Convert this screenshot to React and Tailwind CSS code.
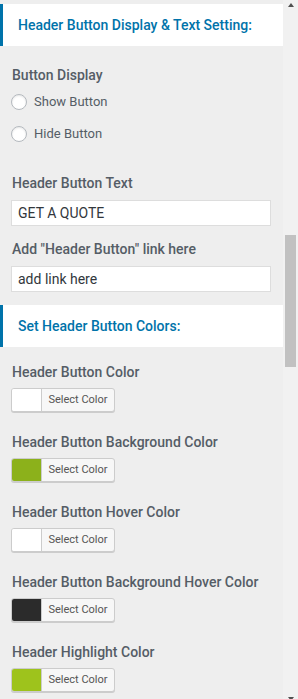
import React from "react";

const font = { fontFamily: "Roboto, 'Noto Sans', Arial, sans-serif" };

function SectionHeader({ children, className = "" }) {
  return (
    <div className={"h-[42px] bg-white border-l-[3px] border-[#0073aa] flex items-center pl-[15px] " + className}>
      <span className="text-[14px] font-medium text-[#0073aa] leading-[20px]">{children}</span>
    </div>
  );
}

function Label({ children, className = "" }) {
  return (
    <div className={"pl-[12px] text-[14px] font-medium text-[#555d66] leading-[20px] " + className}>{children}</div>
  );
}

function Radio({ label, className = "" }) {
  return (
    <div className={"flex items-center h-[24px] pl-[11px] " + className}>
      <span className="w-[16px] h-[16px] rounded-full bg-white border border-[#b4b9be] shadow-[inset_0_1px_2px_rgba(0,0,0,0.1)]" />
      <span className="ml-[7px] text-[13px] text-[#555d66] leading-[20px]">{label}</span>
    </div>
  );
}

function TextInput({ value, className = "" }) {
  return (
    <div className={"ml-[11px] w-[260px] h-[26px] bg-white border border-[#dddddd] flex items-center pl-[6px] " + className}>
      <span className="text-[14px] text-[#32373c] leading-[20px]">{value}</span>
    </div>
  );
}

function ColorPicker({ color, className = "" }) {
  return (
    <div className={"ml-[11px] w-[104px] h-[24px] flex rounded-[3px] border border-[#cccccc] bg-[#f7f7f7] shadow-[0_1px_0_#cccccc] overflow-hidden " + className}>
      <div className="w-[30px] h-full border-r border-[#cccccc]" style={{ backgroundColor: color }} />
      <div className="flex-1 flex items-center justify-center text-[11px] text-[#555555]">Select Color</div>
    </div>
  );
}

const colors = [
  { label: "Header Button Color", color: "#ffffff" },
  { label: "Header Button Background Color", color: "#8cb11b" },
  { label: "Header Button Hover Color", color: "#ffffff" },
  { label: "Header Button Background Hover Color", color: "#2b2b2b" },
  { label: "Header Highlight Color", color: "#9ec31c" },
];

export default function App() {
  return (
    <div className="flex w-[298px] h-[699px] overflow-hidden bg-[#eeeeee]" style={font}>
      <div className="w-[283px] pt-[4px] shrink-0">
        <SectionHeader>Header Button Display &amp; Text Setting:</SectionHeader>
        <Label className="mt-[19px]">Button Display</Label>
        <Radio label="Show Button" className="mt-[5px]" />
        <Radio label="Hide Button" className="mt-[8px]" />
        <Label className="mt-[27px]">Header Button Text</Label>
        <TextInput value="GET A QUOTE" className="mt-[7px]" />
        <Label className="mt-[13px]">Add "Header Button" link here</Label>
        <TextInput value="add link here" className="mt-[7px]" />
        <SectionHeader className="mt-[13px]">Set Header Button Colors:</SectionHeader>
        <div className="flex flex-col gap-[20px] mt-[15px]">
          {colors.map((c) => (
            <div key={c.label}>
              <Label>{c.label}</Label>
              <ColorPicker color={c.color} className="mt-[6px]" />
            </div>
          ))}
        </div>
      </div>
      <div className="w-[15px] bg-[#f1f1f1] flex flex-col items-center shrink-0">
        <div className="mt-[3px] w-0 h-0 border-l-[3.5px] border-r-[3.5px] border-b-[4px] border-l-transparent border-r-transparent border-b-[#505050]" />
        <div className="mt-[228px] w-[11px] h-[132px] bg-[#c1c1c1]" />
        <div className="mt-auto mb-[-2px] w-0 h-0 border-l-[3.5px] border-r-[3.5px] border-t-[4px] border-l-transparent border-r-transparent border-t-[#505050]" />
      </div>
    </div>
  );
}
